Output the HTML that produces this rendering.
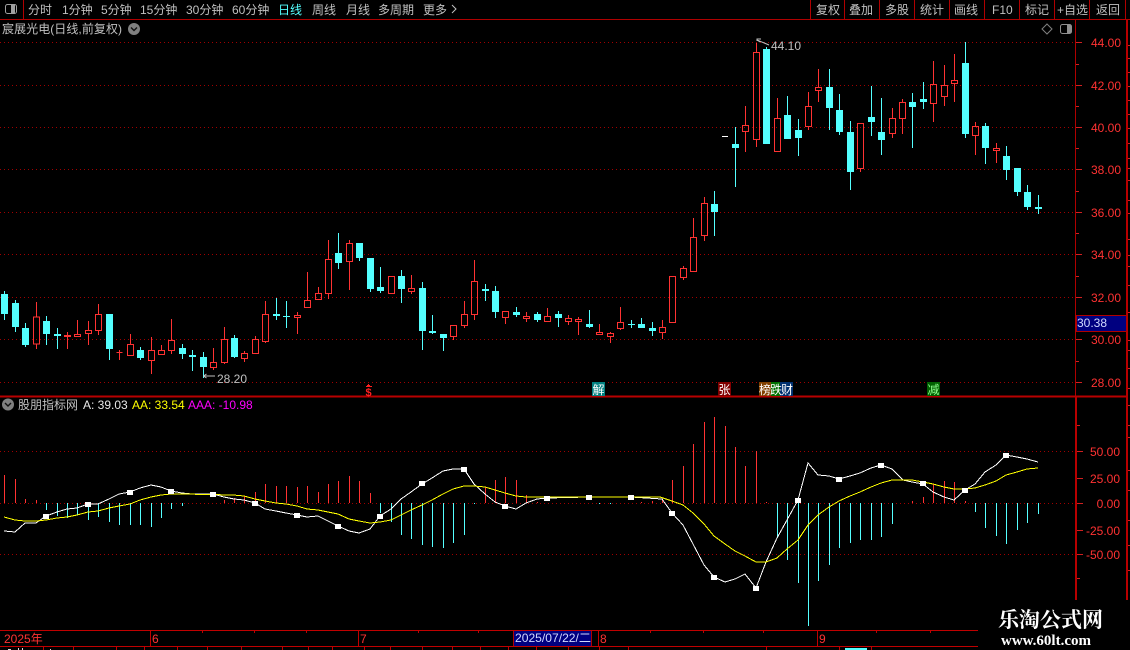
<!DOCTYPE html>
<html><head><meta charset="utf-8"><style>
html,body{margin:0;padding:0;background:#000;width:1130px;height:650px;overflow:hidden}
svg{display:block}
text{font-family:"Liberation Sans","WenQuanYi Zen Hei","Noto Sans CJK SC",sans-serif;font-size:12px}
.m{fill:#c0c0c0}
.a{fill:#ff3232;text-anchor:end}
.c{text-anchor:middle}
</style></head><body>
<svg width="1130" height="650" viewBox="0 0 1130 650" xmlns="http://www.w3.org/2000/svg">
<!-- grid -->
<g fill="none" stroke="#a00000" stroke-dasharray="1 3">
<path d="M0 42.5H1075"/><path d="M0 85.5H1075"/><path d="M0 127.5H1075"/><path d="M0 169.5H1075"/><path d="M0 212.5H1075"/><path d="M0 254.5H1075"/><path d="M0 297.5H1075"/><path d="M0 339.5H1075"/><path d="M0 382.5H1075"/><path d="M0 451.5H1075"/><path d="M0 503.5H1075"/><path d="M0 554.5H1075"/>
</g>
<g shape-rendering="crispEdges">
<!-- frames -->
<path fill="none" stroke="#b00000" d="M0 19.5H1130M23.5 0V19M810.5 0V19M844.5 0V19M879.5 0V19M914.5 0V19M949.5 0V19M984.5 0V19M1019.5 0V19M1054.5 0V19M1089.5 0V19M1125.5 0V19M1075.5 20V396"/>
<path fill="none" stroke="#b80000" stroke-width="2" d="M0 396.5H1127M1076 396V600M1127 20V600"/>
<path fill="none" stroke="#c00000" d="M0 630.5H978M0 646.5H978M150.5 631V646M358.5 631V646M598.5 631V646M817.5 631V646M202.5 631V633M254.5 631V633M306.5 631V633M418.5 631V633M478.5 631V633M650.5 631V633M703.5 631V633M763.5 631V633M876.5 631V633M930.5 631V633M43.5 647V650M73.5 647V650M116.5 647V650M144.5 647V650M177.5 647V650M207.5 647V650M241.5 647V650M282.5 647V650M308.5 647V650M332.5 647V650M364.5 647V650M390.5 647V650M422.5 647V650M452.5 647V650M480.5 647V650M508.5 647V650M536.5 647V650M568.5 647V650M599.5 647V650M628.5 647V650M766.5 647V650M839.5 647V650M871.5 647V650"/>
<!-- axis ticks -->
<path fill="none" stroke="#d02020" d="M1076 42.5h6M1076 85.5h6M1076 127.5h6M1076 169.5h6M1076 212.5h6M1076 254.5h6M1076 297.5h6M1076 339.5h6M1076 382.5h6M1076 64.5h3M1076 106.5h3M1076 148.5h3M1076 191.5h3M1076 233.5h3M1076 276.5h3M1076 361.5h3M1077 451.5h6M1077 478.5h6M1077 503.5h6M1077 530.5h6M1077 554.5h6M1077 425.5h3M1077 578.5h3M1128 45.5h2M1128 58.5h2M1128 72.5h2M1128 86.5h2M1128 100.5h2M1128 114.5h2M1128 128.5h2M1128 143.5h2M1128 158.5h2M1128 168.5h2M1128 180.5h2M1128 200.5h2M1128 213.5h2M1128 239.5h2M1128 255.5h2M1128 266.5h2M1128 285.5h2M1128 312.5h2M1128 340.5h2M1128 350.5h2M1128 368.5h2M1128 388.5h2M1128 405.5h2M1128 425.5h2M1128 437.5h2M1128 470.5h2M1128 490.5h2M1128 520.5h2M1128 545.5h2M1128 570.5h2"/>
<!-- red candles -->
<path fill="none" stroke="#ff3232" d="M36.5 302V317M36.5 344V349M33.5 317h6v27h-6zM67.5 332V335M67.5 337V349M64.5 335.5h6v1h-6zM77.5 320V334M74.5 334.5h6v2h-6zM88.5 321V330M88.5 334V345M85.5 330.5h6v3h-6zM98.5 304V314M98.5 331V335M95.5 314.5h6v16h-6zM119.5 350V360M116.5 352.5h6M130.5 334V344M127.5 344.5h6v11h-6zM151.5 337V350M151.5 361V374M148.5 350.5h6v10h-6zM161.5 345V350M158.5 350.5h6v4h-6zM171.5 319V340M171.5 351V354M168.5 340.5h6v10h-6zM213.5 348V362M213.5 368V370M210.5 362.5h6v5h-6zM224.5 327V339M224.5 363V364M221.5 339.5h6v23h-6zM244.5 351V353M244.5 359V362M241.5 353.5h6v5h-6zM255.5 336V339M252.5 339.5h6v14h-6zM265.5 301V314M265.5 342V343M262.5 314.5h6v27h-6zM297.5 312V315M297.5 318V334M294.5 315.5h6v2h-6zM307.5 272V300M304.5 300.5h6v7h-6zM318.5 287V293M315.5 293.5h6v6h-6zM328.5 240V259M328.5 294V299M325.5 259.5h6v34h-6zM349.5 240V243M349.5 262V290M346.5 243.5h6v18h-6zM388.5 276.5h6v17h-6zM411.5 275V288M411.5 292V294M408.5 288.5h6v3h-6zM453.5 337V340M450.5 325.5h6v11h-6zM464.5 301V314M464.5 326V328M461.5 314.5h6v11h-6zM474.5 260V281M474.5 315V320M471.5 281.5h6v33h-6zM505.5 318V324M502.5 311.5h6v6h-6zM526.5 312V316M526.5 319V322M523.5 316.5h6v2h-6zM547.5 308V316M544.5 316.5h6v5h-6zM568.5 315V318M568.5 322V325M565.5 318.5h6v3h-6zM578.5 317V319M578.5 322V335M575.5 319.5h6v2h-6zM599.5 324V332M596.5 332.5h6v2h-6zM610.5 332V333M610.5 337V343M607.5 333.5h6v3h-6zM620.5 307V322M620.5 329V330M617.5 322.5h6v6h-6zM662.5 320V327M662.5 333V339M659.5 327.5h6v5h-6zM669.5 276.5h6v46h-6zM683.5 266V268M683.5 278V280M680.5 268.5h6v9h-6zM693.5 218V237M690.5 237.5h6v34h-6zM704.5 197V203M704.5 236V241M701.5 203.5h6v32h-6zM745.5 106V125M745.5 132V152M742.5 125.5h6v6h-6zM756.5 43V52M756.5 140V147M753.5 52.5h6v87h-6zM777.5 98V118M774.5 118.5h6v33h-6zM808.5 92V106M808.5 127V130M805.5 106.5h6v20h-6zM818.5 69V87M818.5 91V102M815.5 87.5h6v3h-6zM860.5 169V172M857.5 123.5h6v45h-6zM892.5 108V118M892.5 134V138M889.5 118.5h6v15h-6zM902.5 99V102M902.5 119V134M899.5 102.5h6v16h-6zM933.5 61V84M933.5 104V122M930.5 84.5h6v19h-6zM944.5 65V85M944.5 97V106M941.5 85.5h6v11h-6zM954.5 54V80M954.5 84V102M951.5 80.5h6v3h-6zM975.5 122V126M975.5 136V155M972.5 126.5h6v9h-6zM996.5 143V148M996.5 151V163M993.5 148.5h6v2h-6z"/>
<!-- cyan wicks -->
<path fill="none" stroke="#54ffff" d="M4.5 291V320M15.5 300V332M25.5 323V347M46.5 316V345M57.5 328V349M109.5 314V360M140.5 347V360M182.5 344V359M192.5 350V371M203.5 352V378M234.5 335V358M276.5 298V320M286.5 301V328M338.5 233V269M359.5 243V261M370.5 258V292M380.5 267V293M401.5 270V303M422.5 282V350M432.5 315V334M443.5 334V351M485.5 284V301M495.5 286V318M516.5 307V317M537.5 312V322M558.5 311V327M589.5 310V328M631.5 320V328M641.5 318V328M652.5 322V336M714.5 191V236M735.5 127V187M766.5 47V144M787.5 96V139M798.5 119V156M829.5 69V130M839.5 94V135M850.5 121V190M871.5 86V136M881.5 98V155M912.5 93V148M923.5 82V109M965.5 42V138M985.5 123V164M1006.5 146V180M1017.5 168V196M1027.5 185V210M1038.5 195V214"/>
<path fill="#54ffff" d="M1 294h7v20h-7zM12 303h7v24h-7zM22 328h7v17h-7zM43 321h7v13h-7zM54 334h7v2h-7zM106 314h7v35h-7zM137 350h7v8h-7zM179 348h7v6h-7zM189 355h7v2h-7zM200 357h7v10h-7zM231 338h7v19h-7zM273 314h7v2h-7zM283 316h7v1h-7zM335 253h7v10h-7zM356 243h7v15h-7zM367 258h7v31h-7zM377 287h7v4h-7zM398 276h7v13h-7zM419 288h7v43h-7zM429 331h7v2h-7zM440 334h7v4h-7zM482 289h7v2h-7zM492 291h7v21h-7zM513 312h7v3h-7zM534 314h7v6h-7zM555 314h7v4h-7zM586 324h7v3h-7zM628 324h7v1h-7zM638 324h7v4h-7zM649 328h7v3h-7zM711 204h7v8h-7zM732 144h7v4h-7zM763 49h7v95h-7zM784 115h7v24h-7zM795 130h7v8h-7zM826 87h7v21h-7zM836 110h7v22h-7zM847 132h7v40h-7zM868 117h7v5h-7zM878 132h7v8h-7zM909 102h7v5h-7zM920 99h7v3h-7zM962 63h7v71h-7zM982 126h7v22h-7zM1003 156h7v14h-7zM1014 168h7v24h-7zM1024 192h7v15h-7zM1035 207h7v2h-7z"/>
<rect x="722" y="136" width="6" height="1" fill="#fff"/>
<!-- histogram -->
<path fill="none" stroke="#ff3232" d="M4.5 475V503M15.5 479V503M25.5 499V503M36.5 500V503M224.5 500V503M234.5 498V503M244.5 496V503M255.5 492V503M265.5 484V503M276.5 486V503M286.5 486V503M297.5 487V503M307.5 486V503M318.5 492V503M328.5 484V503M338.5 481V503M349.5 476V503M359.5 481V503M370.5 493V503M485.5 487V503M495.5 480V503M505.5 477V503M516.5 480V503M526.5 495V503M537.5 502V503M641.5 502V503M652.5 501V503M662.5 499V503M672.5 480V503M683.5 466V503M693.5 444V503M704.5 422V503M714.5 417V503M725.5 426V503M735.5 447V503M745.5 466V503M756.5 451V503M766.5 502V503M912.5 501V503M923.5 497V503M933.5 484V503M944.5 481V503M954.5 482V503M965.5 501V503"/>
<path fill="none" stroke="#54ffff" d="M46.5 503V510M57.5 503V516M67.5 503V518M77.5 503V515M88.5 503V520M98.5 503V517M109.5 503V522M119.5 503V525M130.5 503V525M140.5 503V525M151.5 503V527M161.5 503V518M171.5 503V509M182.5 503V506M380.5 503V513M391.5 503V522M401.5 503V535M411.5 503V539M422.5 503V545M432.5 503V547M443.5 503V548M453.5 503V543M464.5 503V535M474.5 503V504M599.5 503V504M610.5 503V504M777.5 503V538M787.5 503V560M798.5 503V583M808.5 503V626M818.5 503V581M829.5 503V565M839.5 503V548M850.5 503V543M860.5 503V540M871.5 503V540M881.5 503V537M892.5 503V524M975.5 503V512M985.5 503V528M996.5 503V536M1006.5 503V544M1017.5 503V530M1027.5 503V523M1038.5 503V514"/>
<!-- lines -->
<polyline fill="none" stroke="#fff" points="4,531 15,532 25,523 36,523 46,516 57,512 67,509 77,508 88,504 98,504 109,499 119,494 130,492 140,488 151,485 161,487 171,491 182,493 192,494 203,494 213,494 224,497 234,499 244,500 255,503 265,509 276,511 286,513 297,515 307,517 318,516 328,521 338,526 349,531 359,533 370,529 380,516 391,509 401,499 411,492 422,484 432,478 443,471 453,469 464,469 474,484 485,494 495,502 505,506 516,509 526,503 537,499 547,498 589,497 631,497 662,499 672,513 683,525 693,544 704,565 714,577 725,582 735,579 745,574 756,588 766,562 777,538 787,520 798,500 808,463 818,475 829,476 839,479 850,476 860,473 871,468 881,465 892,469 903,480 912,482 923,484 933,492 944,497 954,500 965,490 975,484 985,472 996,465 1006,455 1017,457 1027,459 1038,462"/>
<polyline fill="none" stroke="#ffff00" points="4,517 15,520 25,521 36,521 46,520 57,518 67,517 77,515 88,512 98,511 109,508 119,506 130,504 140,500 151,497 161,495 171,494 182,494 233,495 244,496 255,499 265,501 276,503 286,504 297,506 307,509 318,510 328,512 338,514 349,519 359,521 370,523 380,522 391,520 401,515 411,510 422,505 432,500 443,494 453,489 464,486 474,486 485,487 495,490 505,493 516,496 526,497 660,497 672,501 683,505 693,513 704,524 714,536 725,544 735,551 745,556 756,562 766,562 777,558 787,549 798,540 808,525 818,515 829,507 839,501 850,496 860,492 871,487 881,483 892,480 912,480 923,482 933,484 944,487 954,489 965,489 975,488 985,485 996,481 1006,475 1017,472 1027,469 1038,468"/>
<path fill="#fff" d="M43 514h6v5h-6zM85 502h6v5h-6zM127 490h6v5h-6zM168 489h6v5h-6zM210 492h6v5h-6zM252 501h6v5h-6zM294 513h6v5h-6zM335 524h6v5h-6zM377 514h6v5h-6zM419 481h6v5h-6zM461 467h6v5h-6zM502 504h6v5h-6zM544 496h6v5h-6zM586 495h6v5h-6zM628 495h6v5h-6zM669 511h6v5h-6zM711 575h6v5h-6zM753 586h6v5h-6zM795 498h6v5h-6zM836 477h6v5h-6zM878 463h6v5h-6zM920 481h6v5h-6zM962 488h6v5h-6zM1003 453h6v5h-6z"/>
<!-- price box -->
<rect x="1076.5" y="315.5" width="50" height="16" fill="#000080" stroke="#b00000"/>
<rect x="513.5" y="631" width="78" height="15" fill="#000080"/>
<path fill="none" stroke="#b00000" d="M513.5 631V646M591.5 631V646"/>
<!-- signal boxes -->
<rect x="592" y="382" width="13" height="14" fill="#008080"/>
<rect x="718" y="382" width="13" height="14" fill="#800000"/>
<rect x="759" y="382" width="12" height="14" fill="#804000"/>
<rect x="771" y="382" width="9" height="14" fill="#007000"/>
<rect x="780" y="382" width="13" height="14" fill="#003070"/>
<rect x="927" y="382" width="13" height="14" fill="#006000"/>
<path fill="#ff2020" d="M368 384h1v1h-1zM367 385h3v1h-3zM366 386h6v1h-6z"/>
<!-- clipped bottom row -->
<path fill="#ddd" d="M8 649h3v1H8zM18 648h1v2h-1zM22 648h1v2h-1zM50 649h1v1h-1z"/>
<path fill="#54ffff" d="M845 648h22v2h-22z"/>
</g>
<!-- icons -->
<rect x="5.5" y="4.5" width="11" height="9" rx="2" fill="none" stroke="#a0a0a0"/>
<rect x="11" y="5" width="4" height="8" fill="#a0a0a0"/>
<circle cx="134" cy="29" r="6" fill="#808080"/>
<path d="M131 27.5l3 3 3-3" fill="none" stroke="#111" stroke-width="1.4"/>
<circle cx="8" cy="404.5" r="6" fill="#808080"/>
<path d="M5 403l3 3 3-3" fill="none" stroke="#111" stroke-width="1.4"/>
<path d="M1047 24l5 5-5 5-5-5z" fill="none" stroke="#808080"/>
<rect x="1060.5" y="24.5" width="11" height="9" rx="2" fill="none" stroke="#909090"/>
<rect x="1067" y="25" width="4" height="8" fill="#909090"/>
<path d="M452 5l4 4-4 4" fill="none" stroke="#c0c0c0"/>
<path d="M203.5 376H215M203.5 376l3-2M203.5 376l3 2" fill="none" stroke="#c0c0c0"/>
<path d="M757 41v-2h4M757 40l12 5M757 40l3 2" fill="none" stroke="#c0c0c0"/>
<!-- top bar text -->
<g class="m">
<text x="28" y="14">分时</text>
<text x="62" y="14">1分钟</text>
<text x="101" y="14">5分钟</text>
<text x="140" y="14">15分钟</text>
<text x="186" y="14">30分钟</text>
<text x="232" y="14">60分钟</text>
<text x="278" y="14" style="fill:#54ffff">日线</text>
<text x="312" y="14">周线</text>
<text x="346" y="14">月线</text>
<text x="378" y="14">多周期</text>
<text x="423" y="14">更多</text>
<text x="816" y="14">复权</text>
<text x="849" y="14">叠加</text>
<text x="885" y="14">多股</text>
<text x="920" y="14">统计</text>
<text x="954" y="14">画线</text>
<text x="992" y="14">F10</text>
<text x="1025" y="14">标记</text>
<text x="1057" y="14">+自选</text>
<text x="1096" y="14">返回</text>
<text x="2" y="33" textLength="120">宸展光电(日线,前复权)</text>
<text x="18" y="409">股朋指标网</text>
<text x="771" y="50">44.10</text>
<text x="217" y="383">28.20</text>
</g>
<text x="83" y="409" fill="#e8e8e8">A: 39.03</text>
<text x="132" y="409" fill="#ffff00">AA: 33.54</text>
<text x="188" y="409" fill="#ff00ff">AAA: -10.98</text>
<!-- axis labels -->
<g>
<text class="a" x="1121" y="47">44.00</text>
<text class="a" x="1121" y="90">42.00</text>
<text class="a" x="1121" y="132">40.00</text>
<text class="a" x="1121" y="174">38.00</text>
<text class="a" x="1121" y="217">36.00</text>
<text class="a" x="1121" y="259">34.00</text>
<text class="a" x="1121" y="302">32.00</text>
<text class="a" x="1121" y="344">30.00</text>
<text class="a" x="1121" y="387">28.00</text>
<text class="a" x="1120" y="456">50.00</text>
<text class="a" x="1120" y="483">25.00</text>
<text class="a" x="1120" y="508">0.00</text>
<text class="a" x="1120" y="535">-25.00</text>
<text class="a" x="1120" y="559">-50.00</text>
</g>
<text x="1077" y="327" fill="#d0d8ff">30.38</text>
<!-- time axis -->
<text x="4" y="643" fill="#ff3232">2025年</text>
<text x="152" y="643" fill="#ff3232">6</text>
<text x="360" y="643" fill="#ff3232">7</text>
<text x="600" y="643" fill="#ff3232">8</text>
<text x="819" y="643" fill="#ff3232">9</text>
<text x="515" y="642" fill="#d0d8ff" textLength="76" lengthAdjust="spacingAndGlyphs">2025/07/22/二</text>
<!-- signals -->
<text x="365.5" y="396" fill="#ff2020" style="font-weight:bold;font-size:11px">$</text>
<text class="c" x="598.5" y="394" fill="#fff">解</text>
<text class="c" x="724.5" y="394" fill="#fff">张</text>
<text x="759" y="394" fill="#fff">榜</text>
<text x="770" y="394" fill="#fff">跌</text>
<text x="781" y="394" fill="#fff">财</text>
<text class="c" x="933.5" y="394" fill="#90ff90">减</text>
<!-- watermark -->
<rect x="978" y="600" width="152" height="50" fill="#000"/>
<text x="998" y="627" fill="#fff" style="font-family:'Liberation Serif','Noto Serif CJK SC',serif;font-size:21px;font-weight:bold">乐淘公式网</text>
<text x="1001" y="645" fill="#fff" style="font-family:'Liberation Serif',serif;font-size:15px;font-weight:bold">www.60lt.com</text>
</svg>
</body></html>
